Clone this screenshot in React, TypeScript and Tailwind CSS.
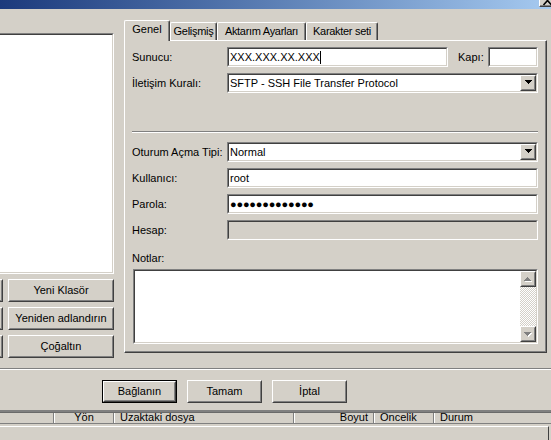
import React from "react";

type BoxProps = {
  className?: string;
  inner?: string;
  children?: React.ReactNode;
};

function Raised({ className = "", inner = "", children }: BoxProps) {
  return (
    <div
      className={`border border-t-white border-l-white border-r-[#404040] border-b-[#404040] bg-[#d4d0c8] ${className}`}
    >
      <div
        className={`h-full w-full border border-t-[#d4d0c8] border-l-[#d4d0c8] border-r-[#808080] border-b-[#808080] flex items-center justify-center ${inner}`}
      >
        {children}
      </div>
    </div>
  );
}

function Sunken({ className = "", inner = "bg-white", children }: BoxProps) {
  return (
    <div
      className={`border border-t-[#808080] border-l-[#808080] border-r-white border-b-white ${className}`}
    >
      <div
        className={`h-full w-full border border-t-[#404040] border-l-[#404040] border-r-[#d4d0c8] border-b-[#d4d0c8] ${inner}`}
      >
        {children}
      </div>
    </div>
  );
}

function DownArrow({ color = "#000000" }: { color?: string }) {
  return (
    <svg width="7" height="4" viewBox="0 0 7 4" shapeRendering="crispEdges">
      <path d="M0 0h7v1h-1v1h-1v1h-1v1h-1v-1h-1v-1h-1v-1h-1z" fill={color} />
    </svg>
  );
}

function UpArrow({ color = "#000000" }: { color?: string }) {
  return (
    <svg width="7" height="4" viewBox="0 0 7 4" shapeRendering="crispEdges">
      <path d="M0 4h7v-1h-1v-1h-1v-1h-1v-1h-1v1h-1v1h-1v1h-1z" fill={color} />
    </svg>
  );
}

function DisabledArrow({ up }: { up: boolean }) {
  return (
    <div className="relative w-[8px] h-[5px]">
      <div className="absolute left-[1px] top-[1px]">
        {up ? <UpArrow color="#ffffff" /> : <DownArrow color="#ffffff" />}
      </div>
      <div className="absolute left-0 top-0">
        {up ? <UpArrow color="#808080" /> : <DownArrow color="#808080" />}
      </div>
    </div>
  );
}

function Combo({ value, className = "" }: { value: string; className?: string }) {
  return (
    <Sunken className={`h-[20px] ${className}`} inner="bg-white flex items-center">
      <div className="flex-1 pl-[1px] whitespace-nowrap overflow-hidden">{value}</div>
      <Raised className="w-[16px] h-[16px]" inner="pb-[2px]">
        <DownArrow />
      </Raised>
    </Sunken>
  );
}

function Label({ children, className = "w-[95px]" }: { children: React.ReactNode; className?: string }) {
  return <div className={`shrink-0 whitespace-nowrap ${className}`}>{children}</div>;
}

function Tab({ children, className }: { children: React.ReactNode; className: string }) {
  return (
    <div
      className={`h-[18px] bg-[#d4d0c8] border-l border-t border-r border-l-white border-t-white border-r-[#404040] shadow-[inset_-1px_0_0_#808080] rounded-t-[2px] flex justify-center pt-[2px] whitespace-nowrap tracking-[-0.3px] ${className}`}
    >
      {children}
    </div>
  );
}

export default function App() {
  const leftButtons = ["Yeni Klasör", "Yeniden adlandırın", "Çoğaltın"];
  return (
    <div className="w-[551px] h-[440px] overflow-hidden bg-[#d4d0c8] flex flex-col text-[11px] leading-[13px] text-black font-['Liberation_Sans',Arial,sans-serif]">
      {/* title bar */}
      <div className="h-[9px] shrink-0 flex justify-end bg-linear-to-r from-[#1c3a7c] to-[#a6caf0]">
        <div className="w-[12px] h-[7px] bg-[#d4d0c8] border-l border-l-white border-b border-b-[#404040] shadow-[inset_0_-1px_0_#808080] overflow-hidden">
          <svg width="12" height="6" viewBox="0 0 12 6">
            <path d="M3.5 5L7.5 0.5L11.5 5" stroke="#000000" strokeWidth="1.6" fill="none" />
          </svg>
        </div>
      </div>

      {/* main area */}
      <div className="h-[359px] shrink-0 flex">
        {/* left column */}
        <div className="w-[114px] shrink-0 pt-[24px] flex flex-col">
          <div className="h-[241px] border-t border-r border-b border-t-[#808080] border-r-white border-b-white">
            <div className="h-full border-t border-r border-b border-t-[#404040] border-r-[#d4d0c8] border-b-[#d4d0c8] bg-white" />
          </div>
          <div className="mt-[5px] flex flex-col gap-[5px]">
            {leftButtons.map((t) => (
              <div key={t} className="flex gap-[5px] h-[23px]">
                <Raised className="w-[80px] h-[23px] ml-[-77px] shrink-0" />
                <Raised className="w-[106px] h-[23px] shrink-0" inner="whitespace-nowrap">
                  {t}
                </Raised>
              </div>
            ))}
          </div>
        </div>

        {/* right column: tab control */}
        <div className="ml-[10px] w-[423px] shrink-0 pt-[11px] flex flex-col">
          <div className="h-[20px] flex items-end">
            <div className="relative z-10 mb-[-1px] h-[21px] w-[46px] bg-[#d4d0c8] border-l border-t border-r border-l-white border-t-white border-r-[#404040] shadow-[inset_-1px_0_0_#808080] rounded-t-[2px] flex justify-center pt-[2px]">
              Genel
            </div>
            <Tab className="w-[47px]">Gelişmiş</Tab>
            <Tab className="w-[89px]">Aktarım Ayarları</Tab>
            <Tab className="w-[72px]">Karakter seti</Tab>
          </div>

          <div className="h-[313px] border border-t-white border-l-white border-r-[#404040] border-b-[#404040] shadow-[inset_-1px_-1px_0_#808080] pt-[6px] pl-[7px] pr-[8px] flex flex-col">
            {/* Sunucu / Kapı */}
            <div className="flex items-center h-[20px]">
              <Label>Sunucu:</Label>
              <Sunken className="w-[221px] h-[20px]" inner="bg-white flex items-center pl-[1px]">
                <span className="whitespace-nowrap">XXX.XXX.XX.XXX</span>
                <span className="inline-block w-[1px] h-[13px] bg-black" />
              </Sunken>
              <Label className="ml-[10px] w-[30px]">Kapı:</Label>
              <Sunken className="w-[50px] h-[20px]" />
            </div>

            {/* İletişim Kuralı */}
            <div className="mt-[6px] flex items-center h-[20px]">
              <Label>İletişim Kuralı:</Label>
              <Combo className="w-[311px]" value="SFTP - SSH File Transfer Protocol" />
            </div>

            {/* separator */}
            <div className="mt-[38px] h-[2px] border-t border-t-[#808080] border-b border-b-white" />

            {/* Oturum Açma Tipi */}
            <div className="mt-[9px] flex items-center h-[20px]">
              <Label>Oturum Açma Tipi:</Label>
              <Combo className="w-[311px]" value="Normal" />
            </div>

            <div className="mt-[6px] flex items-center h-[20px]">
              <Label>Kullanıcı:</Label>
              <Sunken className="w-[311px] h-[20px]" inner="bg-white flex items-center pl-[1px]">
                root
              </Sunken>
            </div>

            <div className="mt-[6px] flex items-center h-[20px]">
              <Label>Parola:</Label>
              <Sunken className="w-[311px] h-[20px]" inner="bg-white flex items-center pl-[1px]">
                <span className="whitespace-nowrap tracking-[-0.2px]">●●●●●●●●●●●●●</span>
              </Sunken>
            </div>

            <div className="mt-[6px] flex items-center h-[20px]">
              <Label>Hesap:</Label>
              <Sunken className="w-[311px] h-[20px]" inner="bg-[#d4d0c8]" />
            </div>

            <div className="mt-[11px] h-[14px] leading-[14px]">Notlar:</div>

            <Sunken className="mt-[4px] ml-[1px] w-[405px] h-[75px]" inner="bg-white flex justify-end">
              <div className="w-[16px] h-full flex flex-col">
                <Raised className="w-[16px] h-[16px] shrink-0">
                  <DisabledArrow up />
                </Raised>
                <div className="flex-1 bg-[image:repeating-conic-gradient(#ffffff_0%_25%,#d4d0c8_0%_50%)] bg-[length:2px_2px]" />
                <Raised className="w-[16px] h-[16px] shrink-0">
                  <DisabledArrow up={false} />
                </Raised>
              </div>
            </Sunken>
          </div>
        </div>
      </div>

      {/* separator */}
      <div className="h-[2px] shrink-0 border-t border-t-[#808080] border-b border-b-white" />

      {/* dialog buttons */}
      <div className="mt-[10px] h-[23px] shrink-0 flex gap-[10px] pl-[102px]">
        <div className="w-[75px] h-[23px] border border-black">
          <Raised className="w-full h-full">Bağlanın</Raised>
        </div>
        <Raised className="w-[75px] h-[23px]">Tamam</Raised>
        <Raised className="w-[75px] h-[23px]">İptal</Raised>
      </div>

      {/* queue list header behind */}
      <div className="mt-[7px] h-[3px] shrink-0 border-t-2 border-t-[#808080] border-b border-b-[#6a6a6a]" />
      <div className="h-[10px] shrink-0 flex overflow-hidden leading-[9px] whitespace-nowrap">
        <div className="w-[54px] shrink-0 border-r border-r-[#808080]" />
        <div className="w-[60px] shrink-0 border-l border-l-white border-r border-r-[#808080] text-center">Yön</div>
        <div className="w-[180px] shrink-0 border-l border-l-white border-r border-r-[#808080] pl-[5px]">Uzaktaki dosya</div>
        <div className="w-[80px] shrink-0 border-l border-l-white border-r border-r-[#808080] pr-[5px] text-right">Boyut</div>
        <div className="w-[60px] shrink-0 border-l border-l-white border-r border-r-[#808080] pl-[5px]">Öncelik</div>
        <div className="flex-1 border-l border-l-white pl-[5px]">Durum</div>
      </div>
      <div className="h-[1px] shrink-0 bg-[#808080]" />
      <div className="mt-[2px] w-[549px] flex-1 border-t border-t-white border-r border-r-[#404040]" />
    </div>
  );
}
